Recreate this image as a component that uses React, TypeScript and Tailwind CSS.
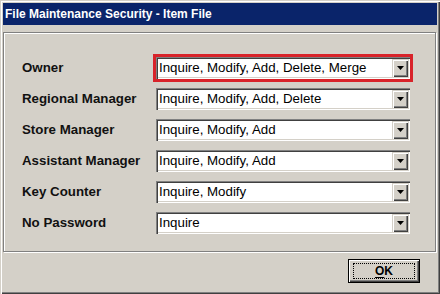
const rows = [
  { label: 'Owner', value: 'Inquire, Modify, Add, Delete, Merge', flagged: true },
  { label: 'Regional Manager', value: 'Inquire, Modify, Add, Delete' },
  { label: 'Store Manager', value: 'Inquire, Modify, Add' },
  { label: 'Assistant Manager', value: 'Inquire, Modify, Add' },
  { label: 'Key Counter', value: 'Inquire, Modify' },
  { label: 'No Password', value: 'Inquire' },
]

function Combo({ value, flagged }: { value: string; flagged?: boolean }) {
  return (
    <div
      className={
        'flex h-[22px] w-[254px] items-stretch bg-white p-[2px] shadow-[inset_1px_1px_0_#808080,inset_2px_2px_0_#404040,inset_-1px_-1px_0_#ffffff,inset_-2px_-2px_0_#d4d0c8] ' +
        (flagged ? 'outline outline-[3px] outline-[#d8232a]' : '')
      }
    >
      <span className="flex flex-1 items-center pl-[1px] text-[13.3px] leading-none text-black">{value}</span>
      {/* dropdown arrow button */}
      <div className="flex w-[16px] items-center justify-center bg-[#d4d0c8] shadow-[inset_1px_1px_0_#d4d0c8,inset_2px_2px_0_#ffffff,inset_-1px_-1px_0_#404040,inset_-2px_-2px_0_#808080]">
        <svg width="7" height="4" viewBox="0 0 7 4">
          <path d="M0 0h7L3.5 4z" fill="#000" />
        </svg>
      </div>
    </div>
  )
}

export default function App() {
  return (
    <div className="flex h-[294px] w-[440px] flex-col bg-[#d4d0c8] p-[3px] font-['Liberation_Sans',Arial,sans-serif] shadow-[inset_1px_1px_0_#d4d0c8,inset_2px_2px_0_#ffffff,inset_-1px_-1px_0_#404040,inset_-2px_-2px_0_#808080]">
      {/* Title bar */}
      <div className="flex h-[22px] items-center bg-[#0a246a] pl-[2px]">
        <span className="text-[12px] font-bold leading-none text-white">File Maintenance Security - Item File</span>
      </div>

      <div className="flex flex-1 flex-col pt-[7px]">
        {/* Group box */}
        <div className="mr-[1px] flex h-[220px] flex-col gap-[9px] border border-[#808080] pl-[18px] pt-[24px] shadow-[inset_1px_1px_0_#ffffff,1px_1px_0_#ffffff]">
          {rows.map((r) => (
            <div key={r.label} className="flex items-center">
              <span className="w-[134px] text-[13.3px] font-bold leading-none text-[#111]">{r.label}</span>
              <Combo value={r.value} flagged={r.flagged} />
            </div>
          ))}
        </div>

        {/* Footer */}
        <div className="flex justify-end pr-[17px] pt-[7px]">
          <button className="flex h-[24px] w-[72px] items-center justify-center border border-black bg-[#d4d0c8] shadow-[inset_1px_1px_0_#ffffff,inset_-1px_-1px_0_#404040,inset_-2px_-2px_0_#808080]">
            <span className="flex h-[16px] w-[62px] items-center justify-center border border-dotted border-black text-[12px] font-bold leading-none text-black">
              <span className="underline underline-offset-2">O</span>K
            </span>
          </button>
        </div>
      </div>
    </div>
  )
}
